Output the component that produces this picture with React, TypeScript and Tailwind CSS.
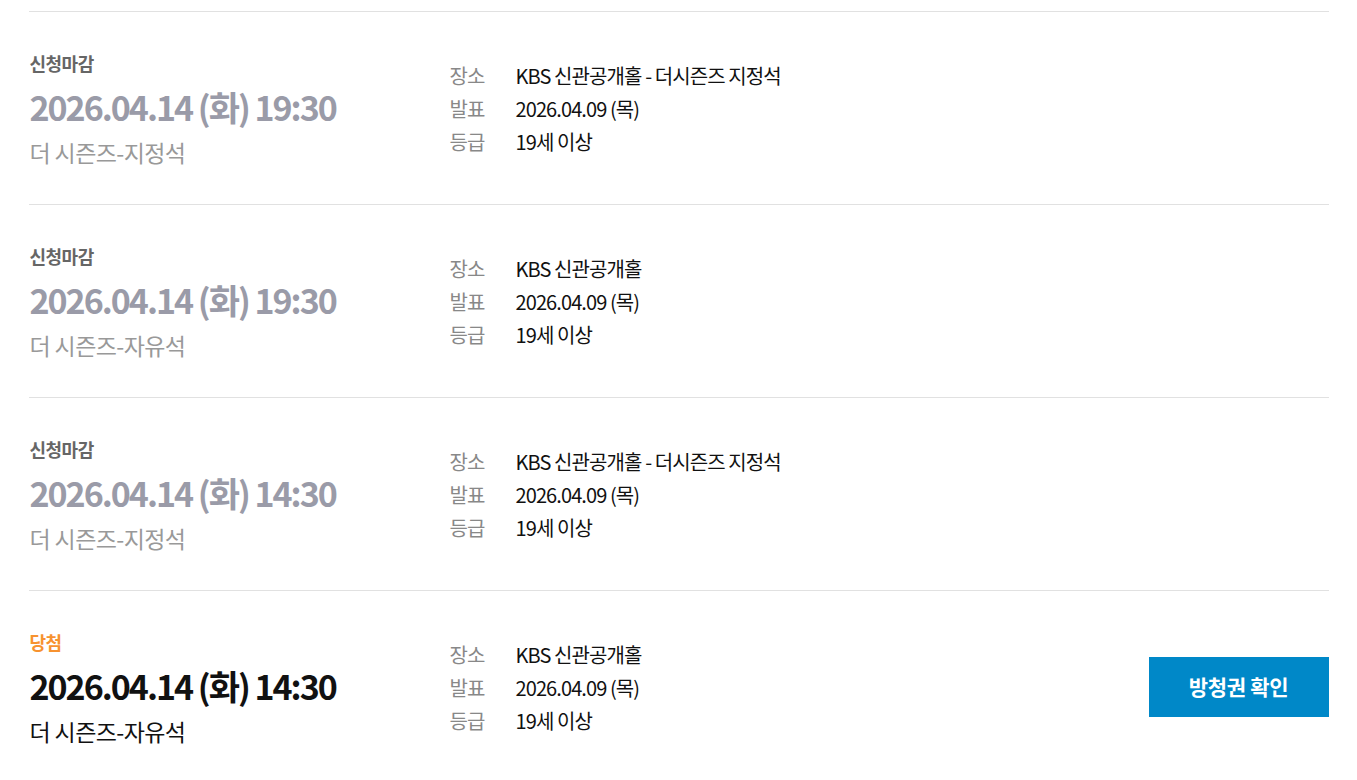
const rows = [
  {
    status: "신청마감",
    date: "2026.04.14 (화) 19:30",
    seat: "더 시즌즈-지정석",
    place: "KBS 신관공개홀 - 더시즌즈 지정석",
    won: false,
  },
  {
    status: "신청마감",
    date: "2026.04.14 (화) 19:30",
    seat: "더 시즌즈-자유석",
    place: "KBS 신관공개홀",
    won: false,
  },
  {
    status: "신청마감",
    date: "2026.04.14 (화) 14:30",
    seat: "더 시즌즈-지정석",
    place: "KBS 신관공개홀 - 더시즌즈 지정석",
    won: false,
  },
  {
    status: "당첨",
    date: "2026.04.14 (화) 14:30",
    seat: "더 시즌즈-자유석",
    place: "KBS 신관공개홀",
    won: true,
  },
];

export default function App() {
  return (
    <div className="min-h-screen bg-white font-['Noto_Sans_CJK_KR','Noto_Sans',sans-serif] pt-[11px]">
      <ul className="w-[1300px] mx-auto">
        {rows.map((row, i) => (
          <li
            key={i}
            className="flex items-center h-[193px] border-t border-[#e1e1e1]"
          >
            {/* Left: status & date */}
            <div className="w-[421px] pl-px pt-[4px]">
              <p
                className={`text-[18px] leading-[24px] font-bold tracking-[-0.5px] ${
                  row.won ? "text-[#f7922f]" : "text-[#666666]"
                }`}
              >
                {row.status}
              </p>
              <p
                className={`mt-[10px] text-[34px] leading-[44px] font-bold tracking-[-2px] ${
                  row.won ? "text-[#111111]" : "text-[#9a9ba8]"
                }`}
              >
                {row.date}
              </p>
              <p
                className={`mt-[5px] text-[23px] leading-[36px] tracking-[-0.6px] ${
                  row.won ? "text-[#111111]" : "text-[#999999]"
                }`}
              >
                {row.seat}
              </p>
            </div>

            {/* Info */}
            <dl className="flex-1 grid grid-cols-[66px_1fr] text-[20px] leading-[33px] tracking-[-0.9px]">
              <dt className="text-[#888888]">장소</dt>
              <dd className="text-[#111111]">{row.place}</dd>
              <dt className="text-[#888888]">발표</dt>
              <dd className="text-[#111111]">2026.04.09 (목)</dd>
              <dt className="text-[#888888]">등급</dt>
              <dd className="text-[#111111]">19세 이상</dd>
            </dl>

            {row.won && (
              <button className="w-[180px] h-[60px] bg-[#0088c8] text-white text-[21px] font-bold tracking-[-0.3px]">
                방청권 확인
              </button>
            )}
          </li>
        ))}
      </ul>
    </div>
  );
}
